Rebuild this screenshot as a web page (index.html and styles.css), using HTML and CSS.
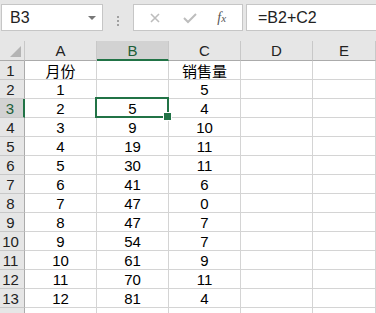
FILE: index.html
```html
<!DOCTYPE html>
<html>
<head>
    <title>Sheet</title>
    <link rel="stylesheet" href="styles.css">
</head>
<body>
    <div class="toolbar">
        <div class="name-box">
            <span>B3</span>
            <span class="drop"></span>
        </div>
        <div class="grip"><i></i><i></i><i></i></div>
        <div class="func-box">
            <svg class="ico" width="14" height="14" viewBox="0 0 14 14"><path d="M3 3 L11 11 M11 3 L3 11" stroke="#bdbdbd" stroke-width="1.6" fill="none"/></svg>
            <svg class="ico" width="16" height="14" viewBox="0 0 16 14"><path d="M2 7 L6 11 L14 3" stroke="#bdbdbd" stroke-width="2" fill="none"/></svg>
            <span class="fx">f<sub>x</sub></span>
        </div>
        <div class="formula">=B2+C2</div>
    </div>

    <div class="sheet" id="sheet">
        <div class="hd corner"><span class="tri"></span></div>
        <div class="hd">A</div>
        <div class="hd sel-col">B</div>
        <div class="hd">C</div>
        <div class="hd">D</div>
        <div class="hd">E</div>
    </div>

    <script>
        const sheet = document.getElementById('sheet');
        const rows = [
            ['月份', '', '销售量'],
            ['1', '', '5'],
            ['2', '5', '4'],
            ['3', '9', '10'],
            ['4', '19', '11'],
            ['5', '30', '11'],
            ['6', '41', '6'],
            ['7', '47', '0'],
            ['8', '47', '7'],
            ['9', '54', '7'],
            ['10', '61', '9'],
            ['11', '70', '11'],
            ['12', '81', '4']
        ];

        rows.forEach(function(r, i) {
            const n = i + 1;
            let html = '<div class="rh' + (n === 3 ? ' sel-row' : '') + '">' + n + '</div>';
            r.forEach(function(v, j) {
                const active = (n === 3 && j === 1) ? ' active' : '';
                html += '<div class="cell' + active + '">' + v + '</div>';
            });
            html += '<div class="cell"></div><div class="cell"></div>';
            sheet.insertAdjacentHTML('beforeend', html);
        });
        sheet.insertAdjacentHTML('beforeend', '<div class="rh"></div><div class="cell"></div><div class="cell"></div><div class="cell"></div><div class="cell"></div><div class="cell"></div>');
    </script>
</body>
</html>
```

FILE: styles.css
```css
* {
    box-sizing: border-box;
}

body {
    margin: 0;
    width: 376px;
    height: 313px;
    overflow: hidden;
    background: #e6e6e6;
    font-family: "Liberation Sans", "Noto Sans CJK SC", sans-serif;
    color: #000;
}

.toolbar {
    display: flex;
    height: 41px;
    padding: 4px 0 0 1px;
}

.name-box,
.func-box,
.formula {
    height: 27px;
    background: #fff;
    border: 1px solid #c6c6c6;
    display: flex;
    align-items: center;
}

.name-box {
    width: 102px;
    padding: 0 6px 0 8px;
    justify-content: space-between;
    font-size: 16px;
    color: #222;
}

.drop {
    width: 0;
    height: 0;
    border-left: 4px solid transparent;
    border-right: 4px solid transparent;
    border-top: 4px solid #777;
}

.grip {
    width: 30px;
    display: flex;
    flex-direction: column;
    align-items: center;
    justify-content: center;
    gap: 2px;
    padding-bottom: 4px;
}

.grip i {
    width: 2px;
    height: 2px;
    background: #a0a0a0;
}

.func-box {
    width: 110px;
    justify-content: space-around;
    padding: 0 6px 0 4px;
}

.fx {
    font-family: "Liberation Serif", serif;
    font-style: italic;
    font-size: 14px;
    color: #555;
}

.fx sub {
    font-size: 11px;
    vertical-align: 0;
}

.formula {
    flex: 1;
    margin-left: 3px;
    border-right: none;
    padding-left: 11px;
    font-size: 16px;
    color: #222;
}

.sheet {
    display: grid;
    grid-template-columns: 25px 72px 72px 72px 72px 1fr;
    grid-auto-rows: 19px;
    grid-template-rows: 20px;
}

.hd {
    background: #e6e6e6;
    border-right: 1px solid #c8c8c8;
    border-bottom: 1px solid #ababab;
    display: flex;
    align-items: center;
    justify-content: center;
    font-size: 15px;
    color: #222;
}

.corner {
    position: relative;
}

.tri {
    position: absolute;
    right: 3px;
    bottom: 3px;
    width: 0;
    height: 0;
    border-left: 11px solid transparent;
    border-bottom: 11px solid #b4b4b4;
}

.sel-col {
    background: #d2d2d2;
    border-bottom: 2px solid #217346;
    color: #1c5e38;
}

.rh {
    background: #e6e6e6;
    border-right: 1px solid #ababab;
    border-bottom: 1px solid #c8c8c8;
    display: flex;
    align-items: center;
    justify-content: center;
    padding-right: 3px;
    font-size: 15px;
    color: #222;
}

.sel-row {
    background: #d2d2d2;
    border-right: 2px solid #217346;
    color: #1c5e38;
}

.cell {
    background: #fff;
    border-right: 1px solid #d4d4d4;
    border-bottom: 1px solid #d4d4d4;
    display: flex;
    align-items: center;
    justify-content: center;
    font-size: 15px;
}

.active {
    position: relative;
}

.active::after {
    content: "";
    position: absolute;
    top: -2px;
    left: -2px;
    right: -1px;
    bottom: -1px;
    border: 2px solid #217346;
}

.active::before {
    content: "";
    position: absolute;
    right: -4px;
    bottom: -4px;
    width: 7px;
    height: 7px;
    background: #217346;
    border: 1px solid #fff;
    z-index: 1;
}
```
